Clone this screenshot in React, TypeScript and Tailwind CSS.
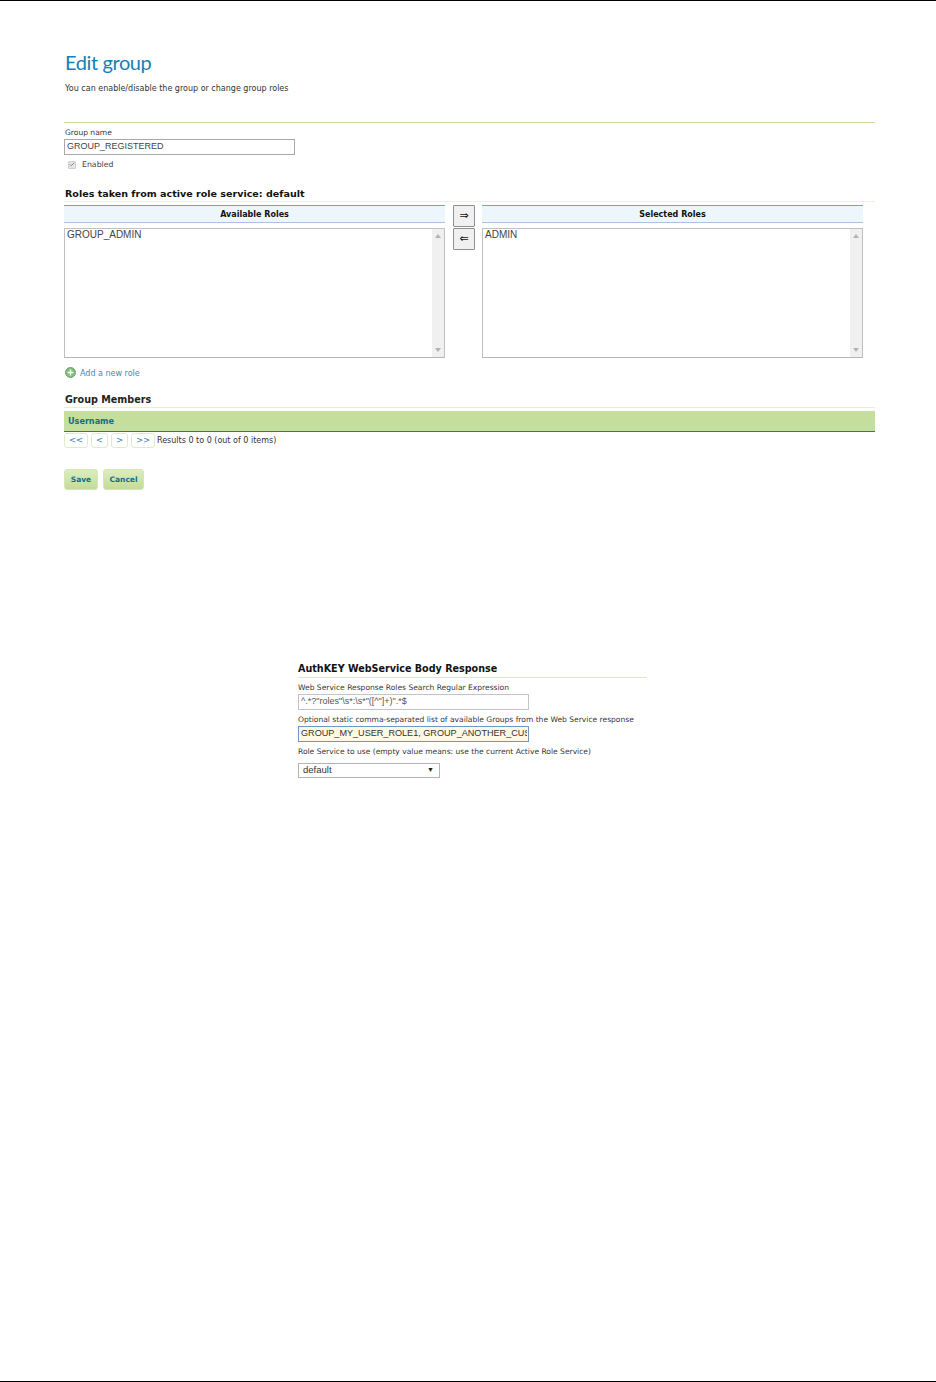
import { Check } from 'lucide-react'

const dejavu = "font-['DejaVu_Sans',sans-serif]"
const arial = "font-['Liberation_Sans',sans-serif]"

function ListBox({ item }: { item: string }) {
  return (
    <div className="flex h-[130px] border border-[#c0c0c0] border-b-[#b4b4b4]">
      <div className={`flex-1 pl-[2px] pt-px text-[10px] leading-[9px] text-[#444] ${arial}`}>{item}</div>
      <div className="flex w-[12px] flex-col items-center justify-between bg-[#f0f0f0] py-[5px]">
        <div className="h-0 w-0 border-x-[3px] border-b-[4px] border-x-transparent border-b-[#b4b4b4]" />
        <div className="h-0 w-0 border-x-[3px] border-t-[4px] border-x-transparent border-t-[#b4b4b4]" />
      </div>
    </div>
  )
}

function RoleColumn({ title, item, width }: { title: string; item: string; width: string }) {
  return (
    <div className={`flex flex-col gap-[5px] ${width}`}>
      <div className={`flex h-[18px] items-center justify-center border-y border-t-[#7da2c9] border-b-[#a9c4e0] bg-[#edf5fd] pt-px text-[8px] font-bold text-[#111] ${dejavu}`}>
        {title}
      </div>
      <ListBox item={item} />
    </div>
  )
}

function ArrowButton({ glyph }: { glyph: string }) {
  return (
    <div className={`flex h-[22px] w-[22px] items-center justify-center rounded-[1px] border border-[#8f8f8f] bg-[#f0f0f0] text-[11px] text-[#111] ${dejavu}`}>
      {glyph}
    </div>
  )
}

function PageButton({ label, width }: { label: string; width: string }) {
  return (
    <div className={`flex h-[15px] items-center justify-center rounded-[3px] border border-[#dfeccb] bg-white text-[8.5px] text-[#2f86a8] ${dejavu} ${width}`}>
      {label}
    </div>
  )
}

function GreenButton({ label, width }: { label: string; width: string }) {
  return (
    <div className={`flex h-[21px] items-center justify-center rounded-[3px] border border-[#d3e6b4] bg-gradient-to-b from-[#dcecc0] to-[#c2dc98] text-[7.5px] font-bold text-[#0d6f8e] ${dejavu} ${width}`}>
      {label}
    </div>
  )
}

export default function App() {
  return (
    <div className={`flex h-[1382px] w-[936px] flex-col border-y border-black bg-white ${dejavu}`}>
      <div className="ml-[64px] flex w-[811px] flex-col pt-[48px]">
        <h1 className="h-[26px] pl-px text-[20px] leading-[26px] tracking-[-0.4px] text-[#1580b4] font-['Lato',sans-serif]">Edit group</h1>
        <p className="mt-[8px] h-[12px] pl-px text-[8px] leading-[12px] text-[#333]">You can enable/disable the group or change group roles</p>
        <div className="mt-[27px] h-px bg-[#c5dd98]" />

        <label className="mt-[5px] h-[10px] pl-px text-[7.55px] leading-[10px] text-[#333]">Group name</label>
        <div className={`mt-[1px] flex h-[16px] w-[231px] items-center border border-[#a8a8a8] pl-[2px] text-[9px] text-[#444] ${arial}`}>
          GROUP_REGISTERED
        </div>
        <div className="mt-[4px] flex h-[11px] items-center gap-[6px] pl-[4px] text-[7.8px] text-[#444]">
          <div className="flex h-[8px] w-[8px] items-center justify-center rounded-[1px] border border-[#cfcfcf] bg-[#e4e4e4]">
            <Check size={7} strokeWidth={4} color="#8a8a8a" />
          </div>
          Enabled
        </div>

        <h3 className="mt-[17px] h-[14px] pl-px text-[9.55px] font-bold leading-[14px] text-[#111]">Roles taken from active role service: default</h3>
        <div className="h-px bg-[#ecf3df]" />

        <div className="mt-[3px] flex items-start">
          <RoleColumn title="Available Roles" item="GROUP_ADMIN" width="w-[381px]" />
          <div className="ml-[8px] flex flex-col gap-px">
            <ArrowButton glyph="⇒" />
            <ArrowButton glyph="⇐" />
          </div>
          <div className="ml-[7px]">
            <RoleColumn title="Selected Roles" item="ADMIN" width="w-[381px]" />
          </div>
        </div>

        <div className="mt-[9px] flex h-[12px] items-center gap-[4px] pl-px text-[8px] leading-[12px] text-[#3a8cb0]">
          <svg width="11" height="11" viewBox="0 0 11 11" className="-mt-px">
            <circle cx="5.5" cy="5.5" r="5" fill="#7fbf7a" stroke="#6aa868" />
            <path d="M5.5 2.5v6M2.5 5.5h6" stroke="#fff" strokeWidth="1.6" />
          </svg>
          <span className="pt-px">Add a new role</span>
        </div>

        <h3 className="mt-[14px] h-[14px] pl-px text-[9.6px] font-bold leading-[14px] text-[#222]">Group Members</h3>
        <div className="h-px bg-[#e8eedc]" />
        <div className="mt-[3px] flex h-[21px] items-center border-b border-[#1080a0] bg-[#c5de9b] pl-[4px] text-[8.1px] font-bold text-[#0d6f8e]">
          Username
        </div>
        <div className="mt-[1px] flex items-center">
          <PageButton label="<<" width="w-[24px]" />
          <div className="ml-[3px]"><PageButton label="<" width="w-[17px]" /></div>
          <div className="ml-[3px]"><PageButton label=">" width="w-[17px]" /></div>
          <div className="ml-[3px]"><PageButton label=">>" width="w-[24px]" /></div>
          <span className="ml-[2px] text-[8px] text-[#333]">Results 0 to 0 (out of 0 items)</span>
        </div>

        <div className="mt-[21px] flex gap-[5px]">
          <GreenButton label="Save" width="w-[34px]" />
          <GreenButton label="Cancel" width="w-[41px]" />
        </div>
      </div>

      <div className="ml-[298px] mt-[172px] flex w-[349px] flex-col">
        <h3 className="h-[14px] text-[9.6px] font-bold leading-[14px] text-[#111]">AuthKEY WebService Body Response</h3>
        <div className="mt-px h-px bg-[#dbe9c2]" />
        <label className="mt-[5px] h-[10px] text-[7.55px] leading-[10px] text-[#333]">Web Service Response Roles Search Regular Expression</label>
        <div className={`mt-[1px] flex h-[16px] w-[231px] items-center border border-[#c4c4c4] pl-[2px] text-[9px] text-[#555] ${arial}`}>
          {'^.*?"roles"\\s*:\\s*"([^"]+)".*$'}
        </div>
        <label className="mt-[3px] h-[13px] whitespace-nowrap text-[7.55px] leading-[13px] text-[#333]">Optional static comma-separated list of available Groups from the Web Service response</label>
        <div className="mt-0 flex h-[16px] w-[231px] items-center border border-[#6f97c4] bg-[#fdf9e4] pl-[2px] pr-[1px]">
          <input
            readOnly
            value="GROUP_MY_USER_ROLE1, GROUP_ANOTHER_CUSTOM_ROLE"
            className={`w-full bg-transparent text-[9.1px] text-[#333] outline-none ${arial}`}
          />
        </div>
        <label className="mt-[5px] h-[10px] whitespace-nowrap text-[7.55px] leading-[10px] text-[#333]">Role Service to use (empty value means: use the current Active Role Service)</label>
        <div className={`mt-[6px] flex h-[15px] w-[142px] items-center justify-between border border-[#b4b4b4] pl-[4px] pr-[5px] text-[9.5px] text-[#333] ${arial}`}>
          default
          <span className="text-[7px] text-[#222]">▼</span>
        </div>
      </div>
    </div>
  )
}
